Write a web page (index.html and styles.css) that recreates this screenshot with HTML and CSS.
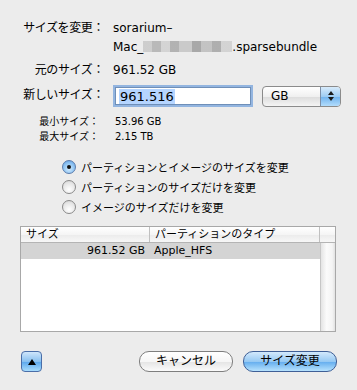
FILE: index.html
```html
<!DOCTYPE html>
<html lang="ja">
<head>
<meta charset="utf-8">
<link rel="stylesheet" href="styles.css">
</head>
<body>
<div class="sheet">
  <div class="info">
    <div class="lbl">サイズを変更：</div>
    <div class="val">sorarium–<br>Mac_<span class="blur"></span>.sparsebundle</div>
    <div class="lbl">元のサイズ：</div>
    <div class="val">961.52 GB</div>
    <div class="lbl new">新しいサイズ：</div>
    <div class="val ctrls">
      <div class="field"><span class="sel">961.516</span></div>
      <div class="popup"><span class="ptext">GB</span><span class="parrows"><svg width="8" height="12" viewBox="0 0 8 12"><path d="M4 1 L7 5 L1 5 Z M1 7 L7 7 L4 11 Z" fill="#1a1a1a"/></svg></span></div>
    </div>
  </div>
  <div class="limits">
    <div class="slbl">最小サイズ：</div><div class="sval">53.96 GB</div>
    <div class="slbl">最大サイズ：</div><div class="sval">2.15 TB</div>
  </div>
  <div class="radios">
    <div class="radio"><span class="dot on"></span>パーティションとイメージのサイズを変更</div>
    <div class="radio"><span class="dot"></span>パーティションのサイズだけを変更</div>
    <div class="radio"><span class="dot"></span>イメージのサイズだけを変更</div>
  </div>
  <div class="table">
    <div class="thead">
      <div class="th c1">サイズ</div>
      <div class="th c2">パーティションのタイプ</div>
      <div class="th c3"></div>
    </div>
    <div class="tbody">
      <div class="rows">
        <div class="tr selrow"><div class="td c1 num">961.52 GB</div><div class="td c2">Apple_HFS</div></div>
      </div>
      <div class="track"></div>
    </div>
  </div>
  <div class="buttons">
    <div class="disc"><svg width="10" height="8" viewBox="0 0 10 8"><path d="M5 1 L9 7 L1 7 Z" fill="#000"/></svg></div>
    <div class="spacer"></div>
    <div class="btn cancel">キャンセル</div>
    <div class="btn ok">サイズ変更</div>
  </div>
</div>
</body>
</html>
```
FILE: styles.css
```css
html, body {
  margin: 0;
  padding: 0;
  background: #ececec;
}
body {
  width: 357px;
  height: 390px;
  overflow: hidden;
  font-family: "DejaVu Sans", "Noto Sans CJK JP", sans-serif;
  color: #000;
}
.sheet {
  padding: 19px 20px 0 20px;
  display: flex;
  flex-direction: column;
}
.info {
  display: grid;
  grid-template-columns: 84px 1fr;
  column-gap: 9px;
  font-size: 12px;
  line-height: 19px;
}
.lbl {
  text-align: right;
  white-space: nowrap;
  letter-spacing: -0.4px;
}
.val {
  white-space: nowrap;
  margin-bottom: 4px;
}
.blur {
  display: inline-block;
  width: 89px;
  height: 11px;
  vertical-align: -1px;
  background: linear-gradient(90deg, #c8c8c8 0 10%, #b0b0b0 10% 20%, #d0d0d0 20% 30%, #a8a8a8 30% 40%, #c4c4c4 40% 55%, #9c9c9c 55% 65%, #bcbcbc 65% 78%, #a4a4a4 78% 88%, #cfcfcf 88%);
  opacity: 0.85;
}
.lbl.new {
  padding-top: 2px;
}
.ctrls {
  display: flex;
  align-items: center;
  gap: 6px;
  margin-left: -1px;
  margin-bottom: 6px;
}
.field {
  width: 131px;
  height: 16px;
  background: #fff;
  border: 1px solid #6f8fb8;
  box-shadow: 0 0 0 2px #93b5e0;
  margin: 3px 3px;
  display: flex;
  align-items: center;
  padding-left: 3px;
  font-size: 13px;
}
.sel {
  background: #b5d5ff;
  padding: 0 1px;
  line-height: 15px;
}
.popup {
  width: 77px;
  height: 19px;
  border: 1px solid #8b8b8b;
  border-radius: 4px;
  background: linear-gradient(#ffffff, #f0f0f0 50%, #dcdcdc 51%, #f4f4f4);
  display: flex;
  overflow: hidden;
  margin-left: 2px;
}
.ptext {
  flex: 1;
  font-size: 12px;
  line-height: 19px;
  padding-left: 8px;
}
.parrows {
  width: 19px;
  display: flex;
  align-items: center;
  justify-content: center;
  background: linear-gradient(#d8ebfb, #9dccf3 50%, #6fb2ee 51%, #b2dcfc);
  border-left: 1px solid #7c8fa8;
}
.limits {
  display: grid;
  grid-template-columns: 79px 1fr;
  column-gap: 16px;
  font-size: 10px;
  line-height: 15px;
  margin-top: 0;
}
.slbl {
  text-align: right;
  white-space: nowrap;
}
.radios {
  margin-top: 13px;
  padding-left: 42px;
  display: flex;
  flex-direction: column;
  font-size: 11px;
}
.radio {
  display: flex;
  align-items: center;
  height: 20px;
  gap: 5px;
  white-space: nowrap;
}
.dot {
  width: 12px;
  height: 12px;
  border-radius: 50%;
  border: 1px solid #8a8a8a;
  background: radial-gradient(circle at 50% 70%, #ffffff, #e6e6e6 60%, #cfcfcf);
  display: flex;
  align-items: center;
  justify-content: center;
  flex: none;
}
.dot.on {
  border-color: #5a7bab;
  background: radial-gradient(circle at 50% 65%, #d4ecff, #8fc4f2 55%, #5a9be0);
}
.dot.on::after {
  content: "";
  width: 4px;
  height: 4px;
  border-radius: 50%;
  background: #111;
}
.table {
  margin-top: 9px;
  width: 314px;
  height: 104px;
  border: 1px solid #a8a8a8;
  background: #fff;
  display: flex;
  flex-direction: column;
  font-size: 11px;
}
.thead {
  display: flex;
  height: 15px;
  border-bottom: 1px solid #b4b4b4;
  background: linear-gradient(#ffffff, #f5f5f5 50%, #ebebeb 51%, #f7f7f7);
  line-height: 15px;
}
.th {
  padding-left: 5px;
  border-right: 1px solid #c0c0c0;
  box-sizing: border-box;
}
.c1 { width: 129px; flex: none; }
.c2 { width: 170px; flex: none; }
.c3 { flex: 1; border-right: none; }
.tbody {
  flex: 1;
  display: flex;
}
.rows {
  width: 299px;
  border-right: 1px solid #c6c6c6;
}
.tr {
  display: flex;
  height: 16px;
  line-height: 16px;
}
.selrow {
  background: #d4d4d4;
}
.td {
  box-sizing: border-box;
  padding-left: 4px;
}
.td.num {
  text-align: right;
  padding-right: 5px;
}
.track {
  flex: 1;
  background: linear-gradient(90deg, #e4e4e4, #fbfbfb 40%, #f4f4f4 80%, #e2e2e2);
}
.buttons {
  margin-top: 19px;
  display: flex;
  align-items: center;
  height: 21px;
}
.disc {
  width: 19px;
  height: 19px;
  border: 1px solid #4a6ea8;
  border-radius: 4px;
  background: linear-gradient(#cfe6fb, #88c0f0 50%, #5aa6ec 51%, #a8dcfc);
  display: flex;
  align-items: center;
  justify-content: center;
  margin-left: 1px;
}
.spacer { flex: 1; }
.btn {
  height: 19px;
  border-radius: 10px;
  font-size: 12px;
  line-height: 19px;
  text-align: center;
  white-space: nowrap;
}
.cancel {
  width: 92px;
  border: 1px solid #7e7e7e;
  background: linear-gradient(#ffffff, #f6f6f6 50%, #e4e4e4 51%, #fbfbfb);
  margin-right: 10px;
}
.ok {
  width: 92px;
  border: 1px solid #3f5f96;
  background: linear-gradient(#d3e9fc, #96c9f3 50%, #62acee 51%, #b7e2fd);
  margin-right: 0;
}
```
